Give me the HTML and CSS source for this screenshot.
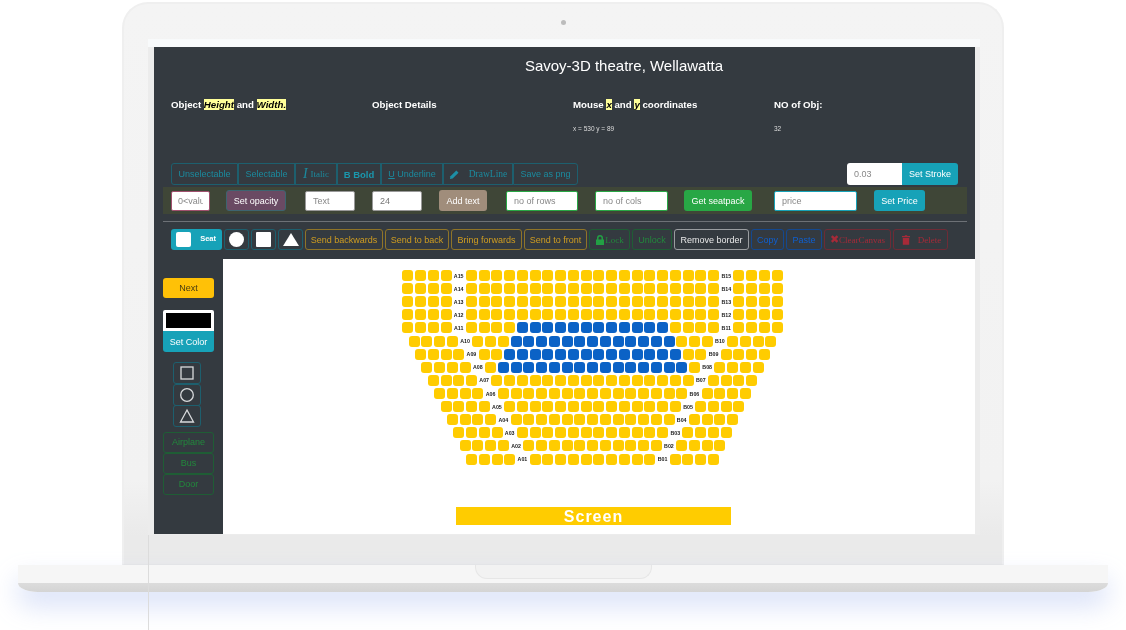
FILE: index.html
```html
<!DOCTYPE html>
<html lang="en">
<head>
  <meta charset="UTF-8" />
  <title>Savoy-3D theatre, Wellawatta</title>
  <link rel="stylesheet" href="styles.css">
</head>
<body>
  <div class="laptop">
    <div class="lid">
      <div class="camera"></div>
      <div class="screen">
        <div class="app">
          <h1 class="title">Savoy-3D theatre, Wellawatta</h1>

          <div class="info">
            <div>
              <h4>Object <mark>Height</mark> and <mark>Width.</mark></h4>
            </div>
            <div>
              <h4>Object Details</h4>
            </div>
            <div>
              <h4>Mouse <mark>x</mark> and <mark>y</mark> coordinates</h4>
              <p>x = 530 y = 89</p>
            </div>
            <div>
              <h4>NO of Obj:</h4>
              <p>32</p>
            </div>
          </div>

          <div class="bar-one">
            <div class="group">
              <button class="btn teal w-unsel">Unselectable</button>
              <button class="btn teal w-sel">Selectable</button>
              <button class="btn teal w-italic"><i class="big-i">I</i><span class="serif">Italic</span></button>
              <button class="btn teal w-bold"><b>B Bold</b></button>
              <button class="btn teal w-under"><u>U</u>&nbsp;Underline</button>
              <button class="btn teal w-draw">
                <svg class="ico" viewBox="0 0 12 12"><path d="M1 11l.6-3L8 1.6 10.400 4 4 10.400z" fill="#1d8fa6"/></svg>
                <span class="serif">DrawLine</span>
              </button>
              <button class="btn teal w-png">Save as png</button>
            </div>
            <div class="stroke">
              <input class="field stroke-input" type="text" placeholder="0.03" />
              <button class="btn solid-teal stroke-btn">Set Stroke</button>
            </div>
          </div>

          <div class="band">
            <input class="field f-val" type="text" placeholder="0&lt;value" />
            <button class="btn b-opacity">Set opacity</button>
            <input class="field f-text" type="text" placeholder="Text" />
            <input class="field f-size" type="text" value="24" />
            <button class="btn b-addtext">Add text</button>
            <input class="field f-rows" type="text" placeholder="no of rows" />
            <input class="field f-cols" type="text" placeholder="no of cols" />
            <button class="btn b-seatpack">Get seatpack</button>
            <input class="field f-price" type="text" placeholder="price" />
            <button class="btn solid-teal b-price">Set Price</button>
          </div>

          <div class="rule"></div>

          <div class="bar-three">
            <button class="btn seat-toggle"><span class="seat-box"></span><b>Seat</b></button>
            <button class="btn teal shape"><span class="dot"></span></button>
            <button class="btn teal shape"><span class="sq"></span></button>
            <button class="btn teal shape"><span class="tri"></span></button>
            <button class="btn orange w-back">Send backwards</button>
            <button class="btn orange w-toback">Send to back</button>
            <button class="btn orange w-fwd">Bring forwards</button>
            <button class="btn orange w-front">Send to front</button>
            <button class="btn green w-lock">
              <svg class="ico-lock" viewBox="0 0 10 10"><path d="M2 4.500V3a3 3 0 0 1 6 0v1.500h1V10H1V4.500zM3.500 4.500h3V3a1.500 1.500 0 0 0-3 0z" fill="#22a044" fill-rule="evenodd"/></svg><span class="serif">Lock</span>
            </button>
            <button class="btn green w-unlock">Unlock</button>
            <button class="btn plain w-remove">Remove border</button>
            <button class="btn blue w-copy">Copy</button>
            <button class="btn blue w-paste">Paste</button>
            <button class="btn red w-clear"><span class="cross">✖</span><span class="serif">ClearCanvas</span></button>
            <button class="btn red w-delete">
              <svg class="ico-trash" viewBox="0 0 10 12"><path d="M3.500 0h3v1H10v1.500H0V1h3.500zM1 3.500h8V12H1z" fill="#a62a38"/></svg>
              <span class="serif">Delete</span>
            </button>
          </div>

          <div class="main">
            <div class="side">
              <button class="btn next">Next</button>
              <div class="swatch"></div>
              <button class="btn solid-teal set-color">Set Color</button>
              <div class="shapes">
                <button class="btn teal tool">
                  <svg viewBox="0 0 16 16"><rect x="2" y="2" width="12" height="12" fill="none" stroke="#d8dadc" stroke-width="1.300"/></svg>
                </button>
                <button class="btn teal tool">
                  <svg viewBox="0 0 16 16"><circle cx="8" cy="8" r="6.300" fill="none" stroke="#d8dadc" stroke-width="1.300"/></svg>
                </button>
                <button class="btn teal tool">
                  <svg viewBox="0 0 16 16"><path d="M8 2l6.500 12h-13z" fill="none" stroke="#d8dadc" stroke-width="1.300"/></svg>
                </button>
              </div>
              <button class="btn green side-btn">Airplane</button>
              <button class="btn green side-btn">Bus</button>
              <button class="btn green side-btn">Door</button>
            </div>

            <div class="canvas">
              <div id="seatMap" class="seat-map"></div>
              <div class="screen-bar">Screen</div>
            </div>
          </div>
        </div>
      </div>
    </div>
    <div class="base">
      <div class="notch"></div>
    </div>
    <div class="cable"></div>
  </div>

  <script>
    // centre seats, first blue seat, number of blue seats (row 15 down to 1)
    const rows = [
      [20, 0, 0], [20, 0, 0], [20, 0, 0], [20, 0, 0], [20, 4, 12],
      [19, 3, 13], [18, 2, 14], [17, 1, 15], [16, 0, 0], [15, 0, 0],
      [14, 0, 0], [13, 0, 0], [12, 0, 0], [11, 0, 0], [10, 0, 0]
    ];
    const seatMap = document.getElementById("seatMap");

    function addSeats(row, count, blueFrom, blueCount) {
      for (let i = 0; i < count; i++) {
        const seat = document.createElement("span");
        seat.className = "seat";
        if (blueCount && i >= blueFrom && i < blueFrom + blueCount) {
          seat.className = "seat taken";
        }
        row.appendChild(seat);
      }
    }

    function addLabel(row, text) {
      const label = document.createElement("span");
      label.className = "seat-label";
      label.textContent = text;
      row.appendChild(label);
    }

    rows.forEach((r, index) => {
      const num = String(15 - index).padStart(2, "0");
      const row = document.createElement("div");
      row.className = "seat-row";
      addSeats(row, 4);
      addLabel(row, "A" + num);
      addSeats(row, r[0], r[1], r[2]);
      addLabel(row, "B" + num);
      addSeats(row, 4);
      seatMap.appendChild(row);
    });
  </script>
</body>
</html>
```

FILE: styles.css
```css
html, body {
  margin: 0;
  height: 630px;
  overflow: hidden;
  background-color: #fff;
  font-family: "Liberation Sans", Arial, sans-serif;
}

/* laptop frame */
.laptop {
  position: relative;
  padding-top: 2px;
}
.lid {
  width: 882px;
  height: 563px;
  margin-left: 122px;
  box-sizing: border-box;
  background: linear-gradient(#f4f4f4, #f2f2f2 85%, #eaeaea 95%);
  border: 2px solid #efefef;
  border-bottom: 1px solid #e6e6e6;
  border-radius: 26px 26px 0 0;
  padding-top: 16px;
  padding-left: 24px;
}
.camera {
  width: 5px;
  height: 5px;
  margin: 0 auto 14px;
  position: relative;
  left: -12px;
  border-radius: 50%;
  background-color: #bcbcbc;
}
.screen {
  width: 832px;
  height: 496px;
  box-sizing: border-box;
  padding: 8px 5px 1px 6px;
  background: linear-gradient(#f8fafb 8px, #ececec 8px);
}
.base {
  width: 1090px;
  height: 27px;
  margin-left: 18px;
  background: linear-gradient(#f6f6f6 18px, #dcdcdc 18px, #d4d4d4);
  border-radius: 0 0 20px 20px / 0 0 9px 9px;
  box-shadow: 0 14px 26px rgba(208, 218, 246, 0.8);
}
.notch {
  width: 177px;
  height: 14px;
  margin: 0 auto;
  box-sizing: border-box;
  background-color: #f2f2f2;
  border: 1px solid #e6e6e6;
  border-top: none;
  border-radius: 0 0 12px 12px;
}
.cable {
  position: absolute;
  left: 148px;
  top: 535px;
  width: 1px;
  height: 95px;
  background-color: #dcdcdc;
}

/* app */
.app {
  height: 487px;
  display: flex;
  flex-direction: column;
  background-color: #343a40;
  color: #fff;
  filter: blur(0.35px);
}
.title {
  margin: 9px 0 0;
  padding-left: 119px;
  height: 42px;
  font-size: 15px;
  line-height: 20px;
  font-weight: normal;
  text-align: center;
}
.info {
  display: grid;
  grid-template-columns: repeat(4, 201px);
  height: 65px;
  padding-left: 17px;
}
.info h4 {
  margin: 0;
  font-size: 9.7px;
  line-height: 14px;
}
.info mark {
  background-color: #ffff99;
  color: #000;
  font-style: italic;
}
.info p {
  margin: 12px 0 0;
  font-size: 6.5px;
  line-height: 9px;
  color: #ddd;
}

.btn {
  display: flex;
  align-items: center;
  justify-content: center;
  box-sizing: border-box;
  margin: 0;
  padding: 0;
  border: 1px solid transparent;
  border-radius: 3px;
  background: none;
  font-family: "Liberation Sans", Arial, sans-serif;
  font-size: 9px;
  color: #fff;
  white-space: nowrap;
  cursor: pointer;
}
.serif {
  font-family: "Liberation Serif", "Times New Roman", serif;
}
.teal {
  color: #1b8a9e;
  border-color: #1d5f6e;
}
.orange {
  color: #d09d20;
  border-color: #8f7428;
}
.green {
  color: #22883c;
  border-color: #1f5d35;
}
.blue {
  color: #0e5fd0;
  border-color: #14488f;
}
.red {
  color: #a62a38;
  border-color: #6e2b36;
}
.plain {
  color: #e8e8e8;
  border-color: #9a9da0;
}
.solid-teal {
  background-color: #17a2b8;
}

.field {
  box-sizing: border-box;
  margin: 0;
  padding: 0 7px;
  height: 20px;
  border: 1px solid #999;
  border-radius: 2px;
  background-color: #fff;
  font-family: "Liberation Sans", Arial, sans-serif;
  font-size: 9px;
  color: #777;
}
.field::placeholder {
  color: #888;
}

.bar-one {
  display: flex;
  justify-content: space-between;
  height: 22px;
  padding: 0 17px;
}
.group {
  display: flex;
}
.group .btn {
  height: 22px;
  border-radius: 0;
}
.group .btn:first-child {
  border-radius: 3px 0 0 3px;
}
.group .btn:last-child {
  border-radius: 0 3px 3px 0;
}
.w-unsel { width: 67px; }
.w-sel { width: 57px; }
.w-italic { width: 42px; }
.w-bold { width: 44px; font-size: 9.5px; color: #1a97ad; }
.w-under { width: 62px; }
.w-draw { width: 70px; font-size: 9.5px; }
.w-png { width: 65px; }
.big-i {
  font-family: "Liberation Serif", serif;
  font-size: 14px;
  margin-right: 3px;
}
.ico {
  width: 11px;
  height: 11px;
  margin-right: 9px;
}
.stroke {
  display: flex;
}
.stroke-input {
  width: 55px;
  height: 22px;
  border: none;
  border-radius: 3px 0 0 3px;
}
.stroke-btn {
  width: 56px;
  height: 22px;
  border-radius: 0 3px 3px 0;
}

.band {
  display: flex;
  align-items: center;
  height: 27px;
  margin: 2px 8px 0 9px;
  padding-left: 8px;
  background-color: #3f4637;
}
.f-val { width: 39px; border-color: #a0506e; padding: 0 6px; }
.b-opacity { width: 60px; height: 21px; margin-left: 16px; background-color: #6a4a63; border-color: #3d6470; }
.f-text { width: 50px; margin-left: 19px; }
.f-size { width: 50px; margin-left: 17px; }
.b-addtext { width: 48px; height: 21px; margin-left: 17px; background-color: #a08d7b; }
.f-rows { width: 72px; margin-left: 19px; border-color: #28a745; }
.f-cols { width: 73px; margin-left: 17px; border-color: #28a745; }
.b-seatpack { width: 68px; height: 21px; margin-left: 16px; background-color: #28a745; }
.f-price { width: 83px; margin-left: 22px; border-color: #17a2b8; }
.b-price { width: 51px; height: 21px; margin-left: 17px; }

.rule {
  height: 1px;
  margin: 7px 8px 0 9px;
  background-color: #6d7176;
}

.bar-three {
  display: flex;
  gap: 2px;
  height: 21px;
  margin-top: 7px;
  padding-left: 17px;
}
.seat-toggle {
  width: 51px;
  justify-content: flex-start;
  padding: 0 5px 0 4px;
  background-color: #17a2b8;
  font-size: 7.5px;
}
.seat-toggle b {
  margin-left: auto;
  padding-bottom: 2px;
}
.seat-box {
  width: 15px;
  height: 15px;
  border-radius: 2px;
  background-color: #fff;
}
.shape {
  width: 25px;
}
.dot {
  width: 15px;
  height: 15px;
  border-radius: 50%;
  background-color: #fff;
}
.sq {
  width: 15px;
  height: 15px;
  border-radius: 1px;
  background-color: #fff;
}
.tri {
  width: 0;
  height: 0;
  border-left: 8px solid transparent;
  border-right: 8px solid transparent;
  border-bottom: 13px solid #fff;
}
.w-back { width: 78px; }
.w-toback { width: 64px; }
.w-fwd { width: 71px; }
.w-front { width: 63px; }
.w-lock { width: 41px; font-size: 9px; }
.ico-lock { width: 10px; height: 10px; }
.w-unlock { width: 40px; }
.w-remove { width: 75px; }
.w-copy { width: 33px; }
.w-paste { width: 36px; }
.w-clear { width: 67px; font-size: 9px; }
.cross { font-size: 11px; }
.w-delete { width: 55px; font-size: 9px; padding-left: 2px; }
.ico-trash { width: 8px; height: 10px; margin-right: 8px; }

/* sidebar and canvas */
.main {
  display: flex;
  flex: 1;
  margin-top: 9px;
  min-height: 0;
}
.side {
  display: flex;
  flex-direction: column;
  width: 69px;
  box-sizing: border-box;
  padding: 19px 9px 0;
}
.next {
  height: 20px;
  background-color: #ffc107;
  color: #4a3d10;
}
.swatch {
  height: 21px;
  margin-top: 12px;
  box-sizing: border-box;
  border: 3px solid #fff;
  border-radius: 2px 2px 0 0;
  background-color: #000;
}
.set-color {
  height: 21px;
  border-radius: 0 0 3px 3px;
}
.shapes {
  display: flex;
  flex-direction: column;
  align-items: center;
  margin: 10px 3px 5px 0;
}
.tool {
  width: 28px;
  height: 22px;
  margin-bottom: -0.5px;
}
.tool svg {
  width: 16px;
  height: 16px;
}
.side-btn {
  height: 21px;
}
.canvas {
  flex: 1;
  background-color: #fff;
  overflow: hidden;
}
.seat-map {
  padding: 10px 13px 0 0;
  height: 197px;
}
.seat-row {
  display: flex;
  justify-content: center;
  align-items: center;
  height: 13.12px;
}
.seat {
  flex: none;
  width: 11px;
  height: 11px;
  margin: 0 0.885px;
  border-radius: 3px;
  background-color: #ffcc00;
}
.taken {
  background-color: #0b62c6;
}
.seat-label {
  flex: none;
  width: 12.6px;
  font-size: 5.3px;
  font-weight: bold;
  text-align: center;
  color: #222;
}
.screen-bar {
  width: 275px;
  height: 18px;
  margin: 41px 0 0 233px;
  background-color: #ffcc00;
  color: #fff;
  font-size: 16px;
  line-height: 20px;
  font-weight: bold;
  letter-spacing: 1px;
  text-align: center;
}
```
